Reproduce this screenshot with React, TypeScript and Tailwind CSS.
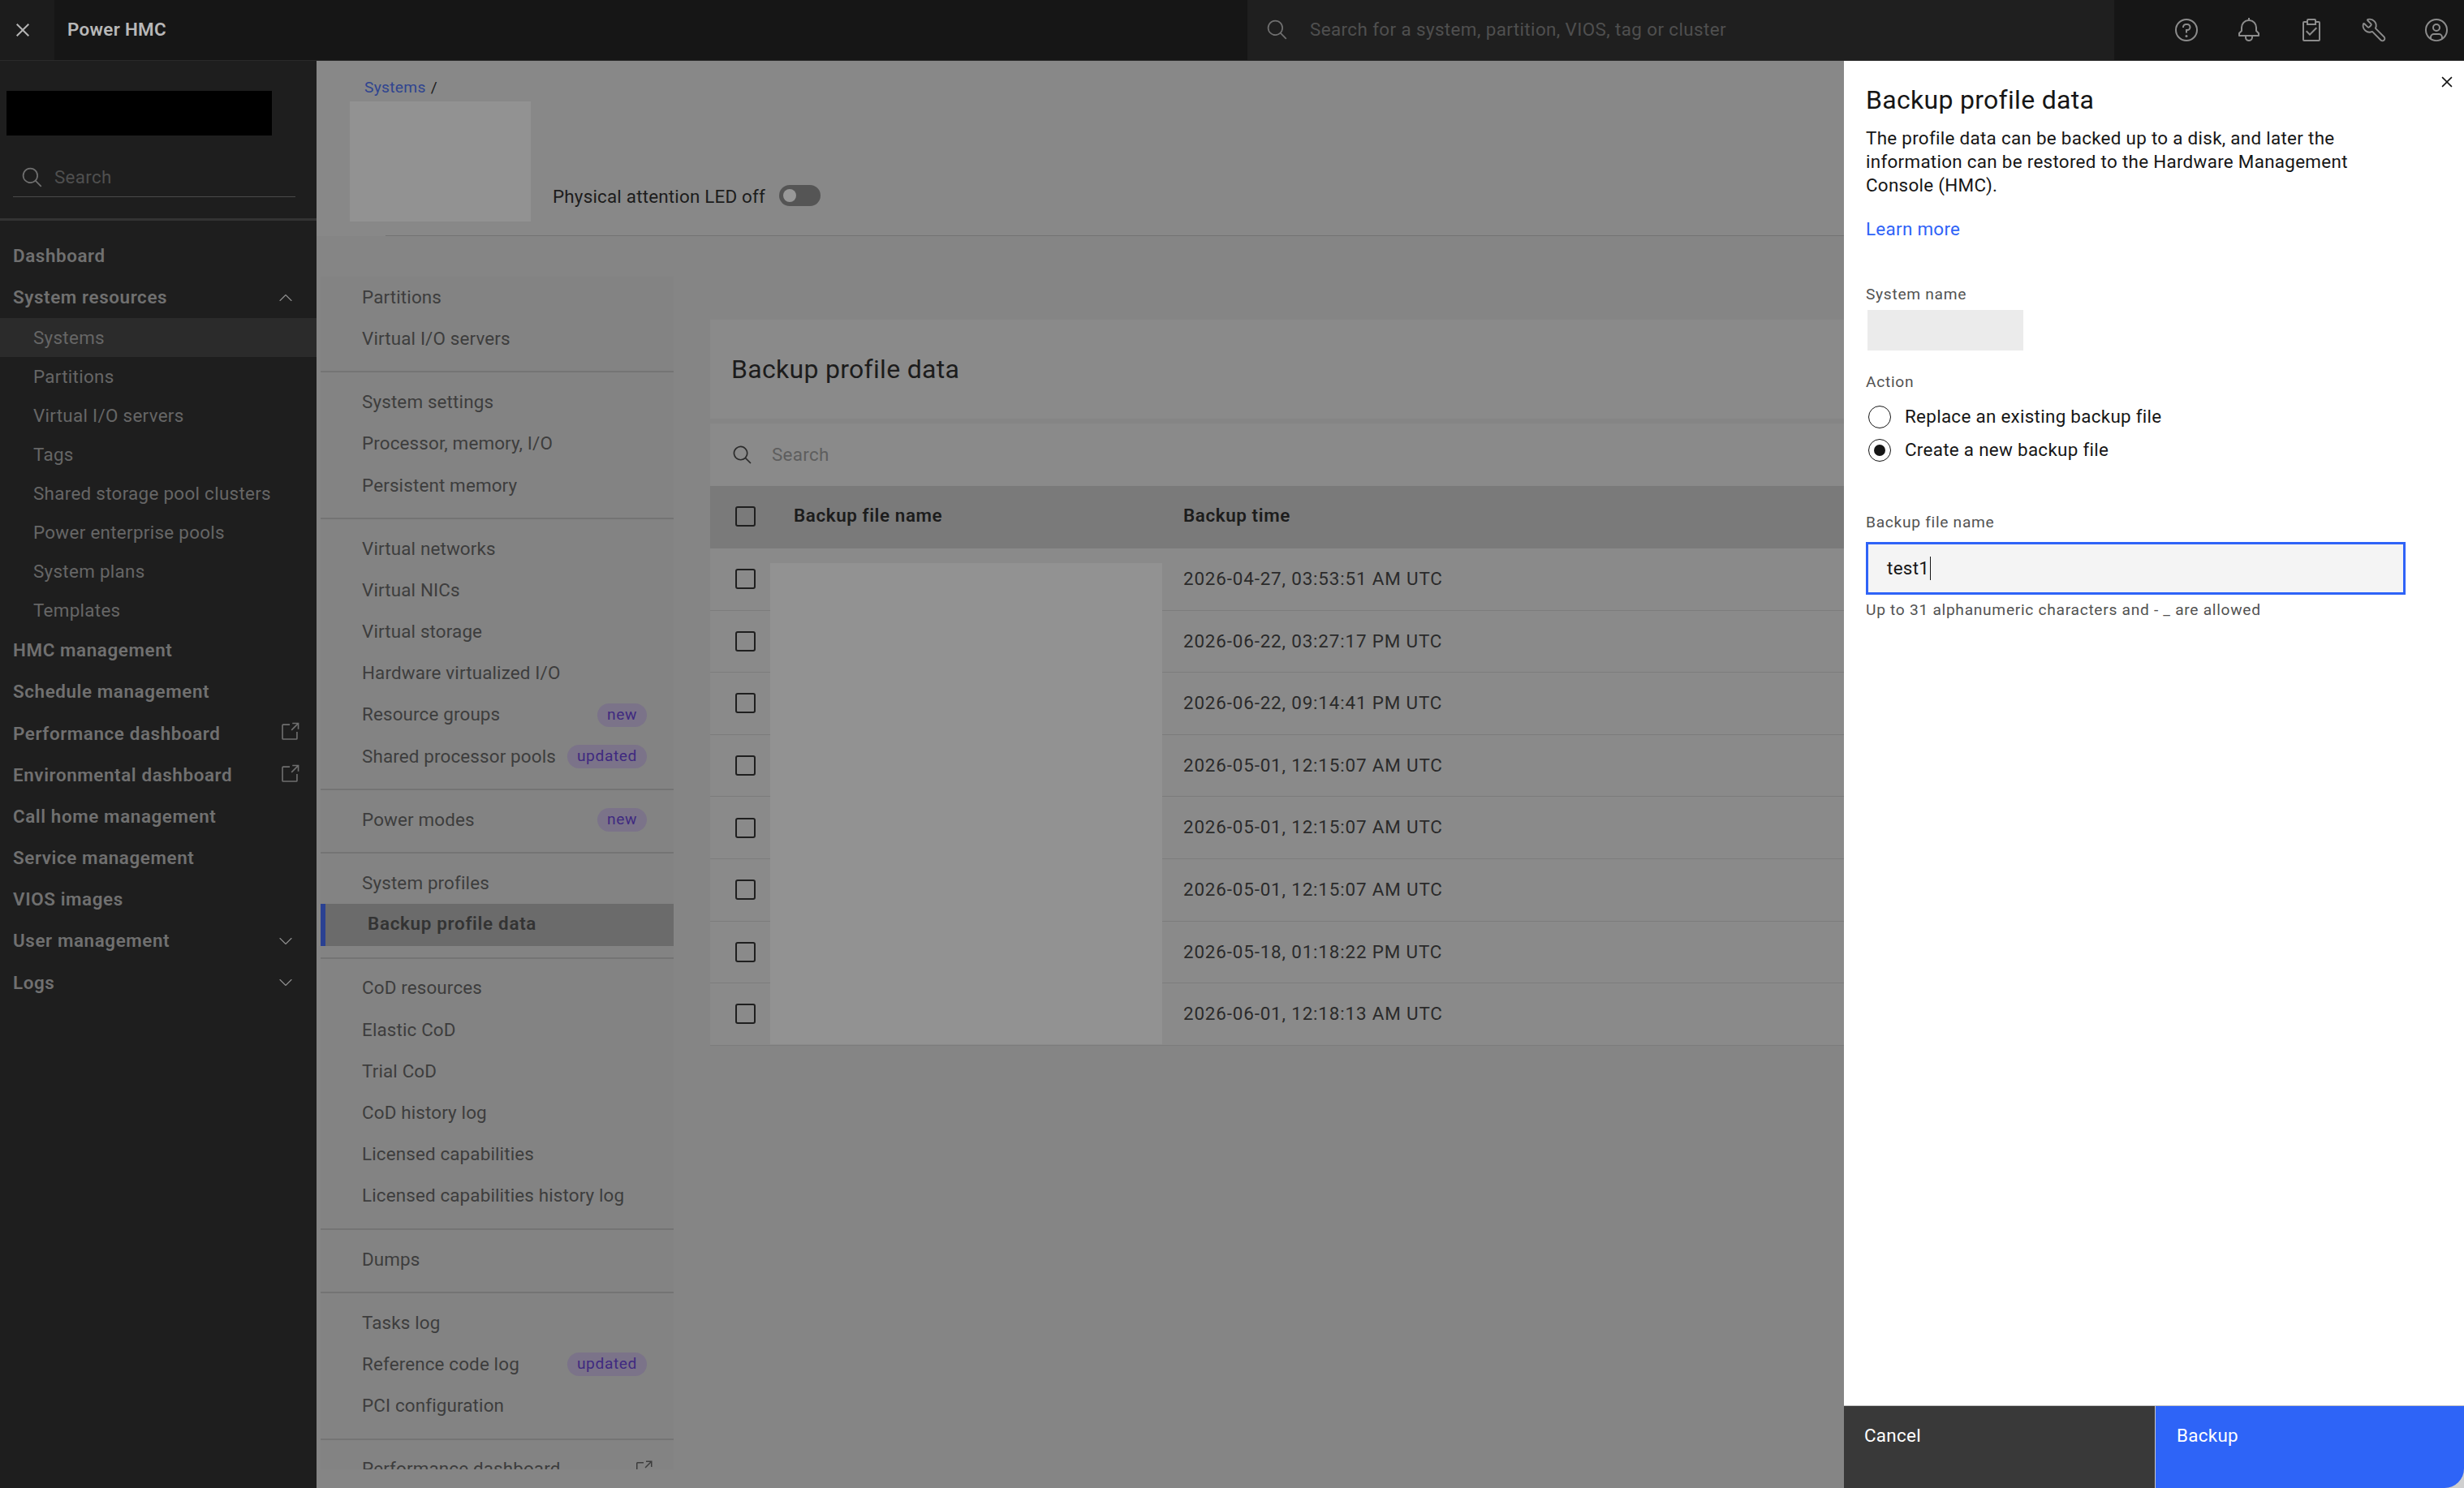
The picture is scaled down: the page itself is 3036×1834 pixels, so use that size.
import React from 'react';
import { ChevronDown, ChevronUp, Wrench } from 'lucide-react';

const CloseIcon = ({ className }: { className: string }) => (
  <svg viewBox="0 0 32 32" fill="currentColor" className={className}>
    <path d="M24 9.4L22.6 8 16 14.6 9.4 8 8 9.4 14.6 16 8 22.6 9.4 24 16 17.4 22.6 24 24 22.6 17.4 16 24 9.4z" />
  </svg>
);

const SearchIcon = ({ className }: { className: string }) => (
  <svg viewBox="0 0 32 32" fill="currentColor" className={className}>
    <path d="M29 27.5859l-7.5521-7.5521a11.0177 11.0177 0 1 0-1.4141 1.4141L27.5859 29ZM4 13a9 9 0 1 1 9 9A9.01 9.01 0 0 1 4 13Z" />
  </svg>
);

const LaunchIcon = ({ className }: { className: string }) => (
  <svg viewBox="0 0 32 32" fill="currentColor" className={className}>
    <path d="M26,28H6a2.0027,2.0027,0,0,1-2-2V6A2.0027,2.0027,0,0,1,6,4H16V6H6V26H26V16h2V26A2.0027,2.0027,0,0,1,26,28Z" />
    <polygon points="20 2 20 4 26.586 4 18 12.586 19.414 14 28 5.414 28 12 30 12 30 2 20 2" />
  </svg>
);

const HeaderIcons = () => (
  <div className="flex w-[431px] items-center gap-[45px] pl-[73px] text-[#8c8c8c]">
    <svg viewBox="0 0 32 32" fill="currentColor" className="h-8 w-8 shrink-0">
      <path d="M16,2A14,14,0,1,0,30,16,14,14,0,0,0,16,2Zm0,26A12,12,0,1,1,28,16,12,12,0,0,1,16,28Z" />
      <circle cx="16" cy="23.5" r="1.5" />
      <path d="M17,8H15.5A4.49,4.49,0,0,0,11,12.5V13h2v-.5A2.5,2.5,0,0,1,15.5,10H17a2.5,2.5,0,0,1,0,5H15v4.5h2V17a4.5,4.5,0,0,0,0-9Z" />
    </svg>
    <svg viewBox="0 0 32 32" fill="currentColor" className="h-8 w-8 shrink-0">
      <path d="M28.7071,19.293,26,16.5859V13a10.0136,10.0136,0,0,0-9-9.9492V1H15V3.0508A10.0136,10.0136,0,0,0,6,13v3.5859L3.2929,19.293A1,1,0,0,0,3,20v3a1,1,0,0,0,1,1h7v.7768a5.152,5.152,0,0,0,4.5,5.1987A5.0057,5.0057,0,0,0,21,25V24h7a1,1,0,0,0,1-1V20A1,1,0,0,0,28.7071,19.293ZM19,25a3,3,0,0,1-6,0V24h6Zm8-3H5V20.4141L7.707,17.707A1,1,0,0,0,8,17V13a8,8,0,0,1,16,0v4a1,1,0,0,0,.293.707L27,20.4141Z" />
    </svg>
    <svg viewBox="0 0 32 32" fill="currentColor" className="h-8 w-8 shrink-0">
      <path d="M14 20.18 10.41 16.59 9 18l5 5 9-9-1.41-1.41-7.59 7.59z" />
      <path d="M25,5H22V4a2,2,0,0,0-2-2H12a2,2,0,0,0-2,2V5H7A2,2,0,0,0,5,7V28a2,2,0,0,0,2,2H25a2,2,0,0,0,2-2V7A2,2,0,0,0,25,5ZM12,4h8V8H12ZM25,28H7V7h3v3H22V7h3Z" />
    </svg>
    <Wrench className="h-8 w-8 shrink-0 -scale-x-100" strokeWidth={1.4} />
    <svg viewBox="0 0 32 32" fill="currentColor" className="h-8 w-8 shrink-0">
      <path d="M16 8a5 5 0 1 0 5 5 5 5 0 0 0-5-5Zm0 8a3 3 0 1 1 3-3 3.0034 3.0034 0 0 1-3 3Z" />
      <path d="M16 2a14 14 0 1 0 14 14A14.0158 14.0158 0 0 0 16 2ZM10 26.3765V25a3.0033 3.0033 0 0 1 3-3h6a3.0033 3.0033 0 0 1 3 3v1.3765a11.8989 11.8989 0 0 1-12 0Zm13.9925-1.4507A5.0016 5.0016 0 0 0 19 20H13a5.0016 5.0016 0 0 0-4.9925 4.9258 12 12 0 1 1 15.985 0Z" />
    </svg>
  </div>
);

const sideSubItems = [
  { label: 'Systems', active: true },
  { label: 'Partitions' },
  { label: 'Virtual I/O servers' },
  { label: 'Tags' },
  { label: 'Shared storage pool clusters' },
  { label: 'Power enterprise pools' },
  { label: 'System plans' },
  { label: 'Templates' },
];

const SideItem = ({ label, launch, chevron }: { label: string; launch?: boolean; chevron?: 'up' | 'down' }) => (
  <div className="flex h-[51.2px] items-center justify-between pl-4 pr-[22px] text-[22.4px] font-semibold tracking-[0.6px] text-[#707070]">
    <span>{label}</span>
    {launch && <LaunchIcon className="-mr-[2px] -mt-[4px] h-[26px] w-[26px] text-[#6f6f6f]" />}
    {chevron === 'up' && <ChevronUp className="mr-[2px] h-7 w-7 text-[#8c8c8c]" strokeWidth={1} />}
    {chevron === 'down' && <ChevronDown className="mr-[2px] h-7 w-7 text-[#8c8c8c]" strokeWidth={1} />}
  </div>
);

const Sidebar = () => (
  <aside className="w-[390px] shrink-0 bg-[#1e1e1e]">
    <div className="h-[197px] border-b-[3px] border-[#333333] pl-2 pt-[37px]">
      <div className="h-[55px] w-[327px] bg-black" />
      <div className="mr-[26px] ml-2 mt-[36px] flex h-[40px] items-center gap-[13px] border-b border-[#4a4a4a] pb-[7px] pl-[10px]">
        <SearchIcon className="h-7 w-7 text-[#6f6f6f]" />
        <span className="text-[22.4px] text-[#4f4f4f]">Search</span>
      </div>
    </div>
    <div className="pt-[18px]">
      <SideItem label="Dashboard" />
      <SideItem label="System resources" chevron="up" />
      {sideSubItems.map((item) => (
        <div
          key={item.label}
          className={`flex h-[48px] items-center pl-[41px] text-[22.4px] text-[#666666] ${item.active ? 'bg-[#2b2b2b]' : ''}`}
        >
          {item.label}
        </div>
      ))}
      <SideItem label="HMC management" />
      <SideItem label="Schedule management" />
      <SideItem label="Performance dashboard" launch />
      <SideItem label="Environmental dashboard" launch />
      <SideItem label="Call home management" />
      <SideItem label="Service management" />
      <SideItem label="VIOS images" />
      <SideItem label="User management" chevron="down" />
      <SideItem label="Logs" chevron="down" />
    </div>
  </aside>
);

type MenuEntry = { label: string; badge?: string; active?: boolean; launch?: boolean };

const menuGroups: MenuEntry[][] = [
  [{ label: 'Partitions' }, { label: 'Virtual I/O servers' }],
  [{ label: 'System settings' }, { label: 'Processor, memory, I/O' }, { label: 'Persistent memory' }],
  [
    { label: 'Virtual networks' },
    { label: 'Virtual NICs' },
    { label: 'Virtual storage' },
    { label: 'Hardware virtualized I/O' },
    { label: 'Resource groups', badge: 'new' },
    { label: 'Shared processor pools', badge: 'updated' },
  ],
  [{ label: 'Power modes', badge: 'new' }],
  [{ label: 'System profiles' }, { label: 'Backup profile data', active: true }],
  [
    { label: 'CoD resources' },
    { label: 'Elastic CoD' },
    { label: 'Trial CoD' },
    { label: 'CoD history log' },
    { label: 'Licensed capabilities' },
    { label: 'Licensed capabilities history log' },
  ],
  [{ label: 'Dumps' }],
  [{ label: 'Tasks log' }, { label: 'Reference code log', badge: 'updated' }, { label: 'PCI configuration' }],
  [{ label: 'Performance dashboard', launch: true }],
];

const MenuItem = ({ item }: { item: MenuEntry }) => {
  if (item.active) {
    return (
      <div className="flex h-[51.2px] items-center border-l-[6px] border-[#2a4192] bg-[#6b6b6b] pb-[3px] pl-[52px] text-[22.4px] font-semibold tracking-[0.7px] text-[#333333]">
        {item.label}
      </div>
    );
  }
  return (
    <div className="flex h-[51.2px] items-center justify-between pl-[51px] pr-[33px] text-[22.4px] tracking-[0.15px] text-[#3d3d3d]">
      <span>{item.label}</span>
      {item.badge && (
        <span className="flex h-[29px] items-center rounded-full bg-[#7b7389] px-[12px] text-[19.2px] tracking-[0.6px] text-[#3f2a80]">
          {item.badge}
        </span>
      )}
      {item.launch && <LaunchIcon className="-mr-[8px] h-6 w-6 text-[#3d3d3d]" />}
    </div>
  );
};

const SideMenu = () => (
  <div className="ml-[5px] h-[1470px] w-[435px] shrink-0 overflow-hidden bg-[#838383]">
    {menuGroups.map((group, i) => (
      <div key={i} className="mb-[11px] border-b-2 border-[#747474] pb-[14px]">
        {group.map((item) => (
          <MenuItem key={item.label} item={item} />
        ))}
      </div>
    ))}
  </div>
);

const backupTimes = [
  '2026-04-27, 03:53:51 AM UTC',
  '2026-06-22, 03:27:17 PM UTC',
  '2026-06-22, 09:14:41 PM UTC',
  '2026-05-01, 12:15:07 AM UTC',
  '2026-05-01, 12:15:07 AM UTC',
  '2026-05-01, 12:15:07 AM UTC',
  '2026-05-18, 01:18:22 PM UTC',
  '2026-06-01, 12:18:13 AM UTC',
];

const Checkbox = () => <div className="h-[25px] w-[25px] rounded-[3px] border-2 border-[#1f1f1f]" />;

const BackupTable = () => (
  <div className="ml-[45px] mt-[53px] min-w-0 flex-1 overflow-hidden">
    <div className="flex h-[122px] items-center bg-[#8a8a8a] pl-[26px] text-[32px] text-[#1c1c1c]">
      Backup profile data
    </div>
    <div className="mt-[6px] flex h-[77px] items-center gap-[23px] bg-[#8a8a8a] pl-[27px] text-[22.4px] text-[#5e5e5e]">
      <SearchIcon className="h-[26px] w-[26px] text-[#2b2b2b]" />
      <span>Search</span>
    </div>
    <div className="flex h-[77px] items-center bg-[#7a7a7a] pb-[3px] pl-[31px] text-[22.4px] font-semibold tracking-[0.6px] text-[#1c1c1c]">
      <Checkbox />
      <span className="ml-[47px] w-[480px]">Backup file name</span>
      <span>Backup time</span>
    </div>
    <div className="relative">
      {backupTimes.map((time, i) => (
        <div key={i} className="flex h-[76.6px] items-center border-b border-[#7c7c7c] bg-[#8a8a8a] pl-[31px] text-[22.4px] tracking-[0.85px] text-[#2a2a2a]">
          <Checkbox />
          <span className="ml-[527px]">{time}</span>
        </div>
      ))}
      {/* blanked-out file names lie over the rows */}
      <div className="absolute left-[74px] top-[18px] h-[593px] w-[483px] bg-[#929292]" />
    </div>
  </div>
);

const MainArea = () => (
  <main className="min-w-0 flex-1 overflow-hidden bg-[#858585]">
    <div className="h-[216px] bg-[#888888] pl-[41px]">
      <div className="flex h-[50px] items-end pb-[2px] pl-[18px] text-[19.2px]">
        <span className="text-[#2f4490]">Systems</span>
        <span className="ml-[6px] text-[#1c1c1c]">/</span>
      </div>
      <div className="flex items-end">
        <div className="h-[148px] w-[223px] bg-[#929292]" />
        <span className="mb-[13px] ml-[27px] text-[22.4px] tracking-[0.2px] text-[#1c1c1c]">Physical attention LED off</span>
        <div className="relative mb-[19px] ml-[17px] h-[26px] w-[51px] rounded-full bg-[#555555]">
          <div className="absolute left-[5px] top-[5px] h-[16px] w-[16px] rounded-full bg-[#989898]" />
        </div>
      </div>
    </div>
    <div className="ml-[85px] h-px -translate-y-px bg-[#737373]" />
    <div className="mt-[49px] flex">
      <SideMenu />
      <BackupTable />
    </div>
  </main>
);

const SidePanel = () => (
  <section className="flex w-[764px] shrink-0 flex-col bg-white text-[#161616]">
    <div className="min-h-0 flex-1 pl-[27px]">
      <div className="flex h-[30px] justify-end pr-[8px] pt-[13px]">
        <CloseIcon className="h-[26px] w-[26px] shrink-0" />
      </div>
      <h2 className="text-[32px] leading-[36px]">Backup profile data</h2>
      <p className="mt-[15px] w-[640px] text-[22.4px] leading-[29px]">
        The profile data can be backed up to a disk, and later the information can be restored to the Hardware Management Console (HMC).
      </p>
      <a className="mt-[25px] block text-[22.4px] leading-[29px] text-[#2f63f7]">Learn more</a>
      <div className="mt-[54px] text-[19.2px] leading-[24px] tracking-[0.7px] text-[#525252]">System name</div>
      <div className="ml-[2px] mt-[7px] h-[50px] w-[192px] bg-[#ebebeb]" />
      <div className="mt-[27px] text-[19.2px] leading-[24px] tracking-[0.7px] text-[#525252]">Action</div>
      <div className="mt-[16px] flex h-[29px] items-center gap-[17px] pl-[3px] text-[22.4px]">
        <div className="h-[28px] w-[28px] rounded-full border-[1.5px] border-[#161616]" />
        <span>Replace an existing backup file</span>
      </div>
      <div className="mt-[12px] flex h-[29px] items-center gap-[17px] pl-[3px] text-[22.4px]">
        <div className="flex h-[28px] w-[28px] items-center justify-center rounded-full border-[1.5px] border-[#161616]">
          <div className="h-[14px] w-[14px] rounded-full bg-[#161616]" />
        </div>
        <span>Create a new backup file</span>
      </div>
      <div className="mt-[63px] text-[19.2px] leading-[24px] tracking-[0.7px] text-[#525252]">Backup file name</div>
      <div className="mt-[12px] flex h-[65px] w-[665px] items-center border-[3px] border-[#2f63f7] bg-[#f4f4f4] pl-[23px] text-[22.4px]">
        <span>test1</span>
        <span className="ml-px h-[29px] w-px bg-[#161616]" />
      </div>
      <div className="mt-[7px] text-[19.2px] leading-[24px] tracking-[0.7px] text-[#525252]">Up to 31 alphanumeric characters and - _ are allowed</div>
    </div>
    <div className="flex h-[102px] border-t border-[#c6c6c6] bg-[#cfcfcf] text-[22.4px] text-white">
      <div className="w-[384px] border-r border-[#c6c6c6] bg-[#393939] pl-[25px] pt-[20px]">Cancel</div>
      <div className="flex-1 rounded-br-[24px] bg-[#2e64f7] pl-[26px] pt-[20px]">Backup</div>
    </div>
  </section>
);

export default function App() {
  return (
    <div className="flex h-[1834px] w-[3036px] flex-col overflow-hidden bg-[#161616] font-['Roboto',sans-serif] tracking-[0.3px]">
      <header className="flex h-[75px] shrink-0 items-center border-b border-[#2a2a2a] bg-[#161616]">
        <div className="flex h-full w-[67px] items-center justify-center bg-[#1c1c1c] pr-[11px]">
          <CloseIcon className="h-8 w-8 text-[#b5b5b5]" />
        </div>
        <span className="ml-4 w-[1454px] text-[22.4px] font-semibold text-[#b8b8b8]">Power HMC</span>
        <div className="flex h-full w-[1068px] items-center gap-[12px] bg-[#1f1f1f] pl-[23px] text-[22.4px] tracking-[0.4px] text-[#4f4f4f]">
          <SearchIcon className="h-7 w-7 text-[#6f6f6f]" />
          <span className="ml-[14px]">Search for a system, partition, VIOS, tag or cluster</span>
        </div>
        <HeaderIcons />
      </header>
      <div className="flex min-h-0 flex-1">
        <Sidebar />
        <MainArea />
        <SidePanel />
      </div>
    </div>
  );
}
